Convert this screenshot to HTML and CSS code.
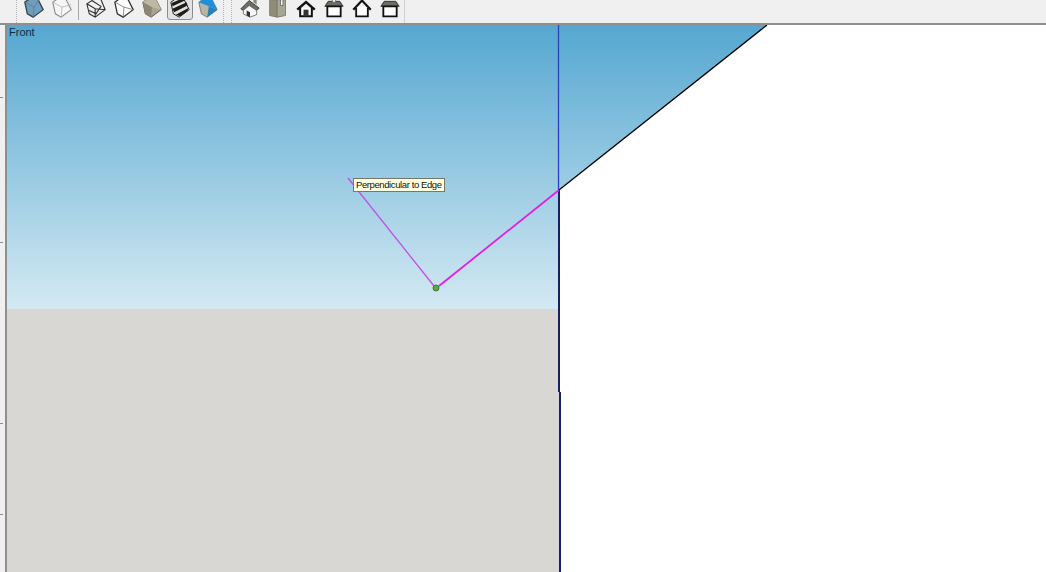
FILE: index.html
```html
<!DOCTYPE html>
<html lang="en">

<head>
    <meta charset="UTF-8">
    <title>Front view</title>
    <link rel="stylesheet" href="styles.css">
</head>

<body>
    <header class="toolbar">
        <span class="grip"></span>
        <div class="tool-group tool-group-styles">
            <button class="tool"><svg viewBox="0 0 24 24"><path d="M1 5L8 0l9 2 6 12-12 9-7-4z" fill="#6f9dbe" stroke="#38444e" stroke-width="1.6"/><path d="M1 5l11 6 6-9M12 11l-1 12" fill="none" stroke="#5b7d96"/></svg></button>
            <button class="tool"><svg viewBox="0 0 24 24"><path d="M1 5L8 0l9 2 6 12-12 9-7-4z" fill="#f6f6f6" stroke="#8a8a8a" stroke-width="1.3"/><path d="M1 5l11 6 11-3M12 11l-1 12" fill="none" stroke="#b5b5b5"/></svg></button>
        </div>
        <span class="divider"></span>
        <div class="tool-group tool-group-faces">
            <button class="tool"><svg viewBox="0 0 24 24"><path d="M1 7L12 0l6 2 5 12-12 9-7-4zM1 7l10 6 12 1M11 13v10M7 3l11 7-6 9-8-4" fill="none" stroke="#2e2e2e" stroke-width="1.3"/></svg></button>
            <button class="tool"><svg viewBox="0 0 24 24"><path d="M1 5L8 0l9 2 6 12-12 9-7-4z" fill="#fff" stroke="#2e2e2e" stroke-width="1.5"/><path d="M1 5l11 6 11 3M12 11l-1 12" fill="none" stroke="#777"/></svg></button>
            <button class="tool"><svg viewBox="0 0 24 24"><path d="M1 5L8 0l9 2 6 12-12 9-7-4z" fill="#a9a48f" stroke="#5f5c50" stroke-width="1.2"/><path d="M1 5l11 6 11 3-6-12-9-2z" fill="#bdb8a4"/><path d="M1 5l11 6-1 12-7-4z" fill="#8b8774"/></svg></button>
            <button class="tool tool-active"><svg viewBox="0 0 24 24"><path d="M1 5L8 0l9 2 6 12-12 9-7-4z" fill="#e4e2da" stroke="#222" stroke-width="1.2"/><path d="M2 6l14-6 2 3L3 10zM3 13l17-8 1 4L5 17zM7 20l15-8-1 4-9 6z" fill="#1c1c1c"/></svg></button>
            <button class="tool"><svg viewBox="0 0 24 24"><path d="M1 5L8 0l9 2 6 12-12 9-7-4z" fill="#b9b6a4" stroke="#6a7078" stroke-width="1"/><path d="M1 5L8 0l9 2 6 12-10-4z" fill="#1e8fdc"/><path d="M23 14L11 23l2-13z" fill="#2a7fc0"/></svg></button>
        </div>
        <span class="grip grip-wide"></span>
        <div class="tool-group tool-group-views">
            <button class="tool"><svg viewBox="0 0 24 24"><path d="M1 13L11 3l12 9-3 3-9-6-7 6z" fill="#6d6d64" stroke="#333"/><path d="M4 15l7-6 9 6v5l-8 3-8-4z" fill="#f6f6f6" stroke="#666"/><path d="M8 15l4 2v6l-4-2z" fill="#333"/><path d="M16 0h4v8l-4-3z" fill="#8a8a80"/></svg></button>
            <button class="tool"><svg viewBox="0 0 24 24"><path d="M2 2h9v21l-9-2z" fill="#8f8d78" stroke="#77756a"/><path d="M11 2h10v19l-10 2z" fill="#a8a692" stroke="#77756a"/><path d="M15 2h3v7h-3z" fill="#f6f6f6" stroke="#666"/></svg></button>
            <button class="tool"><svg viewBox="0 0 24 24"><path d="M1.500 14L12 5l10.500 9" fill="none" stroke="#111" stroke-width="3"/><path d="M5 12v10h14V12" fill="#fff" stroke="#111" stroke-width="2.400"/><path d="M9 14h6v8H9z" fill="#333"/></svg></button>
            <button class="tool"><svg viewBox="0 0 24 24"><path d="M5 4h14l4 6H1z" fill="#6d6d64" stroke="#222"/><path d="M10 0h4v5h-4z" fill="#f6f6f6" stroke="#666"/><path d="M4 10h16v12H4z" fill="#fff" stroke="#111" stroke-width="2.200"/></svg></button>
            <button class="tool"><svg viewBox="0 0 24 24"><path d="M1.500 14L12 3l10.500 11" fill="none" stroke="#111" stroke-width="2.600"/><path d="M5 11v11h14V11" fill="#fff" stroke="#111" stroke-width="2.200"/></svg></button>
            <button class="tool"><svg viewBox="0 0 24 24"><path d="M5 4h14l4 6H1z" fill="#6d6d64" stroke="#222"/><path d="M4 10h16v12H4z" fill="#fff" stroke="#111" stroke-width="2.200"/></svg></button>
        </div>
        <span class="toolbar-end"></span>
    </header>

    <div class="workspace">
        <aside class="ruler">
            <span class="tick tick-a"></span>
            <span class="tick tick-b"></span>
            <span class="tick tick-c"></span>
            <span class="tick tick-d"></span>
        </aside>
        <main class="viewport">
            <div class="sky"><span class="scene-name">Front</span></div>
            <div class="ground"></div>
            <svg class="model" viewBox="7 25 1039 547">
                <polygon points="559,190 767,25 1046,25 1046,572 559,572" fill="#fff"/>
                <line x1="558.500" y1="25" x2="558.500" y2="190" stroke="#2a3fc4" stroke-width="1.300"/>
                <line x1="559" y1="190" x2="767" y2="25" stroke="#000" stroke-width="1.300"/>
                <line x1="559" y1="190" x2="559" y2="392" stroke="#14206e" stroke-width="2"/>
                <line x1="560" y1="392" x2="560" y2="572" stroke="#14206e" stroke-width="2"/>
                <line x1="348" y1="178" x2="434" y2="286" stroke="#c24fe6" stroke-width="1.300"/>
                <line x1="439" y1="286" x2="559" y2="190" stroke="#e01fe6" stroke-width="1.800"/>
                <circle cx="436" cy="288" r="3" fill="#58a93f" stroke="#3c7d3a"/>
            </svg>
            <div class="tooltip">Perpendicular to Edge</div>
        </main>
    </div>
</body>

</html>
```

FILE: styles.css
```css
body {
    margin: 0;
    padding: 0;
    height: 572px;
    overflow: hidden;
    display: flex;
    flex-direction: column;
    background-color: #f0f0f0;
    font-family: "Liberation Sans", Arial, sans-serif;
}

.toolbar {
    display: flex;
    align-items: flex-end;
    height: 23px;
    padding-left: 16px;
    overflow: hidden;
    flex-shrink: 0;
    background-color: #f0f0f0;
    border-bottom: 2px solid #8f8f8f;
}

.tool-group {
    display: flex;
    gap: 2px;
    margin-bottom: 3px;
}

.tool-group-styles {
    margin-left: 4px;
}

.tool-group-faces {
    margin-left: 4px;
}

.tool-group-views {
    margin-left: 5px;
}

.tool {
    display: flex;
    align-items: flex-end;
    width: 26px;
    height: 28px;
    margin: 0;
    padding: 0 2px 1px;
    flex-shrink: 0;
    box-sizing: border-box;
    background: none;
    border: 1px solid transparent;
}

.tool svg {
    display: block;
    width: 20px;
    height: 20px;
}

.tool-active {
    background-color: #e2e2e2;
    border-color: #8c8c8c;
    border-radius: 3px;
}

.grip {
    width: 0;
    height: 23px;
    border-left: 1px dotted #b5b5b5;
}

.grip-wide {
    width: 7px;
    margin-left: 2px;
    border-right: 1px dotted #b5b5b5;
}

.divider {
    width: 0;
    height: 20px;
    margin-left: 3px;
    margin-bottom: 3px;
    border-left: 1px solid #a8a8a8;
}

.toolbar-end {
    width: 0;
    height: 23px;
    margin-left: 1px;
    border-left: 1px solid #d0d0d0;
}

.workspace {
    display: flex;
    flex: 1;
    min-height: 0;
}

.ruler {
    position: relative;
    width: 5px;
    flex-shrink: 0;
    background-color: #f1f0f0;
    border-right: 2px solid #8f8f8f;
}

.tick {
    position: absolute;
    left: 0;
    width: 3px;
    height: 1px;
    background-color: #8c8c8c;
}

.tick-a {
    top: 72px;
}

.tick-b {
    top: 217px;
}

.tick-c {
    top: 398px;
}

.tick-d {
    top: 489px;
}

.viewport {
    position: relative;
    display: flex;
    flex-direction: column;
    flex: 1;
}

.sky {
    height: 284px;
    background: linear-gradient(to bottom, #55a7d1, #d4e9f2);
}

.ground {
    flex: 1;
    background-color: #d8d7d3;
}

.scene-name {
    position: absolute;
    top: 1px;
    left: 2px;
    z-index: 1;
    font-size: 11px;
    color: #0f2c44;
}

.model {
    position: absolute;
    top: 0;
    left: 0;
    width: 100%;
    height: 100%;
}

.tooltip {
    position: absolute;
    top: 153px;
    left: 346px;
    padding: 0 2px;
    font-size: 9.5px;
    letter-spacing: -0.4px;
    line-height: 12px;
    white-space: nowrap;
    color: #111;
    background-color: #ffffe1;
    border: 1px solid #77776a;
}
```
